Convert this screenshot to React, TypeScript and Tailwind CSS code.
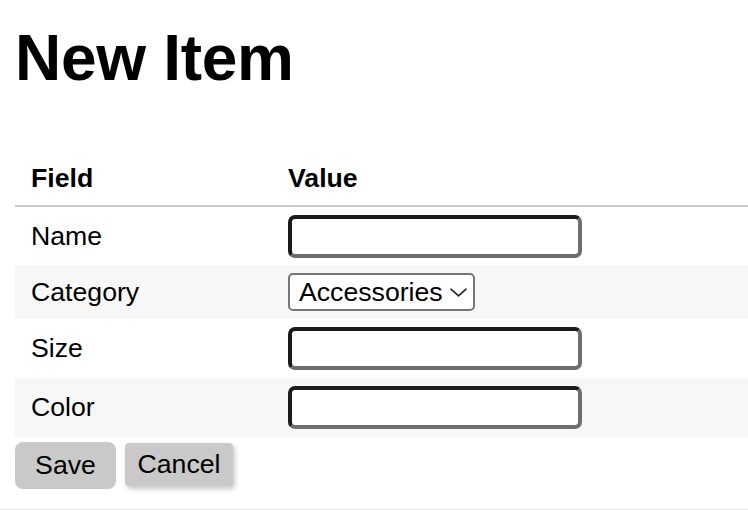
import React from "react";

type Row = { label: string; kind: "text" | "select"; value?: string };

const rows: Row[] = [
  { label: "Name", kind: "text" },
  { label: "Category", kind: "select", value: "Accessories" },
  { label: "Size", kind: "text" },
  { label: "Color", kind: "text" },
];

function TextBox() {
  return (
    <input
      type="text"
      className="block w-[294px] h-[43px] rounded-[7px] border-[4px] border-t-[#1b1b1b] border-l-[#1b1b1b] border-b-[#6e6e6e] border-r-[#6e6e6e] bg-white outline-none"
    />
  );
}

function SelectBox({ value }: { value: string }) {
  return (
    <div className="flex items-center w-[187px] h-[38px] rounded-[5px] border-2 border-[#767676] bg-white pl-[9px] pr-[6px]">
      <span className="flex-1 text-[26.67px] leading-none">{value}</span>
      <svg width="17" height="9" viewBox="0 0 17 9" fill="none" className="ml-[2px]">
        <path d="M1 1.2 L8.5 7.8 L16 1.2" stroke="#222" strokeWidth="1.6" strokeLinecap="round" strokeLinejoin="round" />
      </svg>
    </div>
  );
}

export default function App() {
  return (
    <div className="w-[748px] h-[510px] overflow-hidden bg-white text-black font-['Liberation_Sans',Arial,sans-serif]">
      <div className="border-b-2 border-[#e9e9e9] pl-[15px] pb-[20px]">
        <h1 className="pt-[21px] text-[64px] font-bold leading-[74px] tracking-[-0.3px]">New Item</h1>

        <table className="mt-[55px] w-full border-collapse text-[26.67px]">
          <thead>
            <tr className="border-b-2 border-[#c8c8c8]">
              <th className="w-[257px] px-[16px] pt-[13px] pb-[11px] text-left font-bold leading-[31px]">Field</th>
              <th className="px-[16px] pt-[13px] pb-[11px] text-left font-bold leading-[31px]">Value</th>
            </tr>
          </thead>
          <tbody>
            {rows.map((r, i) => (
              <tr
                key={r.label}
                className={
                  (i % 2 === 1 ? "bg-[#f7f7f7] " : "bg-white ") +
                  (r.kind === "select" ? "h-[54px]" : "h-[59px]")
                }
              >
                <td className="px-[16px] align-middle leading-[31px]">{r.label}</td>
                <td className="px-[16px] align-middle">
                  {r.kind === "select" ? <SelectBox value={r.value ?? ""} /> : <TextBox />}
                </td>
              </tr>
            ))}
          </tbody>
        </table>

        <div className="mt-[5px] flex items-start gap-[9px]">
          <button className="w-[101px] h-[47px] rounded-[8px] bg-[#c9c9c9] text-[26.67px] leading-none">Save</button>
          <button className="mt-[1px] w-[108px] h-[43px] rounded-[4px] bg-[#c9c9c9] text-[26.67px] leading-none shadow-[2px_3px_5px_rgba(0,0,0,0.22)]">
            Cancel
          </button>
        </div>
      </div>
    </div>
  );
}
